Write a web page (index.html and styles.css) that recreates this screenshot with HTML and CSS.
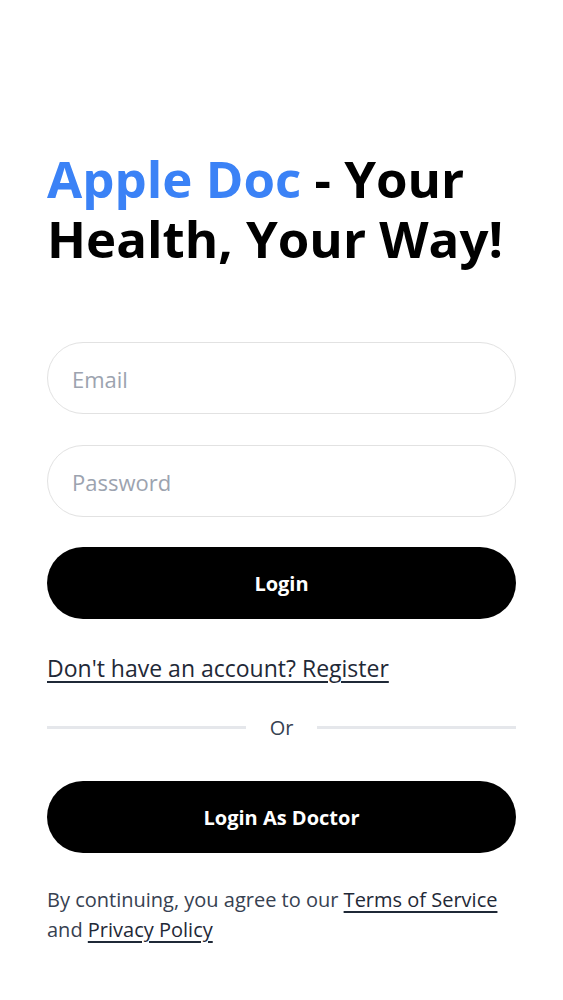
FILE: index.html
```html
<!DOCTYPE html>
<html lang="en">
<head>
<meta charset="utf-8">
<title>Apple Doc - Login</title>
<link rel="stylesheet" href="styles.css">
</head>
<body>
<main class="page">
  <h1 class="title"><span class="brand">Apple Doc</span> - Your Health, Your Way!</h1>
  <form class="form">
    <input class="field" type="email" placeholder="Email">
    <input class="field" type="password" placeholder="Password">
    <button class="btn" type="button">Login</button>
  </form>
  <a class="register" href="#">Don't have an account? Register</a>
  <div class="divider"><span class="line"></span><span class="or">Or</span><span class="line"></span></div>
  <button class="btn" type="button">Login As Doctor</button>
  <p class="terms">By continuing, you agree to our <a href="#">Terms of Service</a> and <a href="#">Privacy Policy</a></p>
</main>
</body>
</html>
```
FILE: styles.css
```css
* { box-sizing: border-box; }
html, body { margin: 0; background: #fff; }
body { font-family: "Open Sans", "Noto Sans", sans-serif; color: #000; }
.page {
  padding: 148px 47px 0;
  display: flex;
  flex-direction: column;
}
.title {
  margin: 0;
  font-size: 51px;
  line-height: 60px;
  font-weight: 700;
  color: #000;
}
.brand { color: #3b82f6; }
.form {
  margin-top: 74px;
  display: flex;
  flex-direction: column;
  gap: 31px;
}
.field {
  height: 72px;
  width: 100%;
  border: 1.5px solid #e2e2e2;
  border-radius: 999px;
  padding: 2px 24px 0;
  font-family: inherit;
  font-size: 22px;
  color: #111;
  outline: none;
  background: #fff;
}
.field::placeholder { color: #9ca3af; }
.btn {
  height: 72px;
  width: 100%;
  border: none;
  border-radius: 999px;
  background: #000;
  color: #fff;
  font-family: inherit;
  font-size: 20px;
  font-weight: 700;
}
.form .btn { margin-top: -1px; }
.register {
  margin-top: 34px;
  font-size: 23px;
  line-height: 30px;
  color: #1f2937;
  text-decoration: underline;
  text-underline-offset: 4px;
  align-self: flex-start;
}
.divider {
  margin: 31px 0 40px;
  display: flex;
  align-items: center;
  gap: 24px;
}
.line { flex: 1; height: 3px; background: #e5e7eb; }
.or { font-size: 20px; color: #374151; }
.terms {
  margin: 32px 0 0;
  font-size: 20px;
  line-height: 30px;
  color: #374151;
}
.terms a { color: #1f2937; text-decoration: underline; text-underline-offset: 4px; }
```
